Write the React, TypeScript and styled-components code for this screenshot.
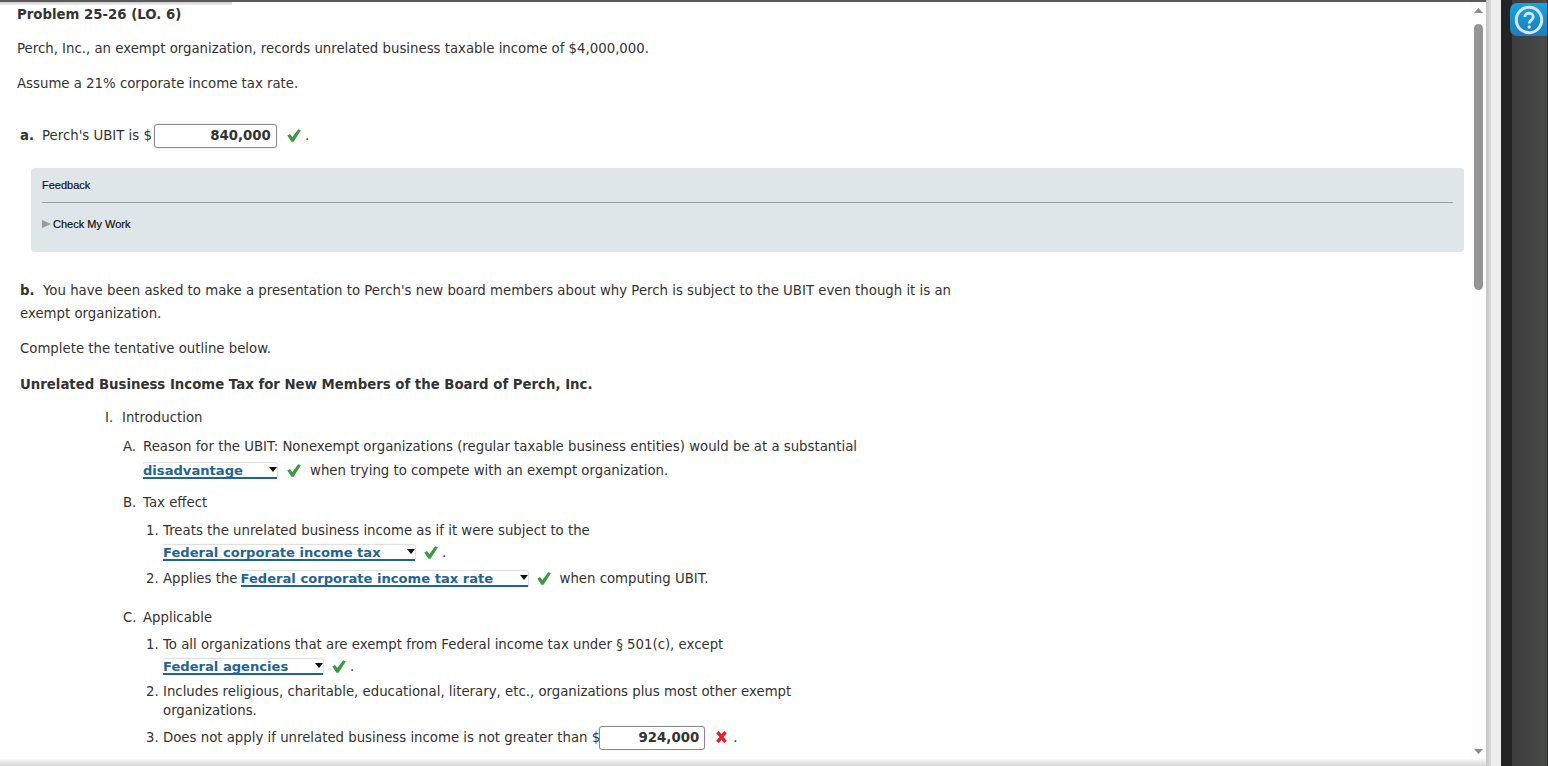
import React from 'react';
import styled, { createGlobalStyle } from 'styled-components';

const Global = createGlobalStyle`
  html, body { margin: 0; padding: 0; height: 100%; overflow: hidden; background: #fff; }
  * { box-sizing: border-box; }
`;

const Page = styled.div`
  display: flex;
  width: 1548px;
  height: 766px;
  overflow: hidden;
  font-family: "DejaVu Sans", Verdana, sans-serif;
  font-size: 13.3px;
  color: #333;
`;

const Main = styled.div`
  position: relative;
  display: flex;
  width: 1486px;
  height: 766px;
  border-top: 2px solid #5a5a5a;
`;

const TopShadow = styled.div`
  position: absolute;
  left: 0;
  top: 0;
  width: 232px;
  height: 3px;
  background: linear-gradient(#c8c8c8, #f4f4f4);
`;

const BottomShadow = styled.div`
  position: absolute;
  left: 0;
  right: 0;
  bottom: 0;
  height: 7px;
  background: linear-gradient(#fafafa, #d4d4d4);
`;

const Content = styled.div`
  flex: 1;
  min-width: 0;
  overflow: hidden;
`;

const Scrollbar = styled.div`
  display: flex;
  flex-direction: column;
  align-items: center;
  width: 15px;
  background: #fdfdfd;
  padding-top: 6px;
  padding-bottom: 6px;
`;

const Thumb = styled.div`
  width: 9px;
  height: 266px;
  margin-top: 5px;
  border-radius: 5px;
  background: #949494;
`;

const Spacer = styled.div`
  flex: 1;
`;

const Arrow = styled.svg`
  display: block;
  margin-bottom: 6px;
`;

const Gutter = styled.div`
  width: 5px;
  background: linear-gradient(90deg, #c4c4c4, #dcdcdc);
`;

const Rail = styled.div`
  width: 11px;
  background: #eeeeee;
`;

const DarkRail = styled.div`
  width: 11px;
  background: #232323;
`;

const Side = styled.div`
  flex: 1;
  padding-top: 3px;
  background: linear-gradient(90deg, #3c3c3c, #4a4a4a);
  border-right: 1px solid #1d3a2c;
`;

const HelpButton = styled.div`
  width: 37px;
  height: 33px;
  margin-left: -2px;
  border-radius: 7px 0 0 7px;
  background: linear-gradient(#12a5e6, #1b7db8);
  display: flex;
  align-items: center;
  justify-content: center;
`;

const Title = styled.div`
  margin: 5px 0 0 17px;
  font-weight: 700;
  line-height: 16px;
`;

const Para = styled.p<{ $top: number; $left?: number; $bold?: boolean }>`
  margin: ${p => p.$top}px 0 0 ${p => p.$left ?? 17}px;
  line-height: 16px;
  font-weight: ${p => (p.$bold ? 700 : 400)};
`;

const Line = styled.div<{ $top: number; $left: number; $height?: number }>`
  display: flex;
  align-items: center;
  margin: ${p => p.$top}px 0 0 ${p => p.$left}px;
  height: ${p => p.$height ?? 16}px;
  line-height: 16px;
  white-space: pre;
`;

const Marker = styled.span<{ $width: number; $bold?: boolean }>`
  flex: none;
  width: ${p => p.$width}px;
  font-weight: ${p => (p.$bold ? 700 : 400)};
`;

const AmountBox = styled.span<{ $width: number; $shift: number }>`
  flex: none;
  width: ${p => p.$width}px;
  height: 24px;
  margin-left: ${p => p.$shift}px;
  border: 1px solid #8a8a8a;
  border-radius: 3px;
  box-shadow: 0 0 1px #999;
  padding-right: 5px;
  text-align: right;
  font-weight: 700;
  line-height: 22px;
`;

const Dropdown = styled.span<{ $width: number; $shift?: number }>`
  position: relative;
  flex: none;
  width: ${p => p.$width}px;
  height: 16px;
  margin-left: ${p => p.$shift ?? 0}px;
  box-shadow: 0 -1px 1px #dddddd, 1px 0 1px #dddddd;
  border-bottom: 2px solid #1f6496;
  border-radius: 2px 2px 0 0;
  color: #1f6496;
  font-weight: 700;
  font-size: 13.1px;
  line-height: 15px;
  overflow: hidden;
`;

const Caret = styled.svg`
  position: absolute;
  right: 0;
  top: 4px;
`;

const Mark = styled.svg<{ $left: number; $right: number }>`
  flex: none;
  margin: 0 ${p => p.$right}px 2px ${p => p.$left}px;
`;

const FeedbackBox = styled.div`
  margin: 20px 22px 0 31px;
  width: 1433px;
  height: 84px;
  border-radius: 4px;
  background: #dfe6e9;
  padding: 0 11px;
  font-family: "Liberation Sans", Arial, sans-serif;
  font-size: 11px;
  color: #111;
  -webkit-text-stroke: 0.2px #111;
`;

const FeedbackTitle = styled.div`
  height: 35px;
  line-height: 35px;
  border-bottom: 1px solid #9aa0a3;
`;

const FeedbackRow = styled.div`
  display: flex;
  align-items: center;
  gap: 2px;
  margin-top: 13px;
  line-height: 16px;
`;

const Tick = ({ left = 9, right = 9 }: { left?: number; right?: number }) => (
  <Mark $left={left} $right={right} width="14" height="13" viewBox="0 0 14 13">
    <path d="M0.3 6.6 L3 5 L5.4 8 L11.2 0.2 L13.9 1.3 L6.6 12.8 L4.4 12.8 Z" fill="#3b9a3f" />
  </Mark>
);

const Cross = () => (
  <Mark $left={11} $right={6} width="11" height="12" viewBox="0 0 11 12">
    <path d="M1.5 1 L9.5 11 M9.5 1 L1.5 11" fill="none" stroke="#f01c24" strokeWidth="3.4" />
  </Mark>
);

const Select = ({ width, shift, children }: { width: number; shift?: number; children: string }) => (
  <Dropdown $width={width} $shift={shift}>
    {children}
    <Caret width="8" height="5" viewBox="0 0 8 5">
      <path d="M0 0 H8 L4 5 Z" fill="#111" />
    </Caret>
  </Dropdown>
);

export default function App() {
  return (
    <Page>
      <Global />
      <Main>
        <TopShadow />
        <BottomShadow />
        <Content>
          <Title>Problem 25-26 (LO. 6)</Title>
          <Para $top={18}>Perch, Inc., an exempt organization, records unrelated business taxable income of $4,000,000.</Para>
          <Para $top={19}>Assume a 21% corporate income tax rate.</Para>
          <Line $top={32} $left={20} $height={24}>
            <Marker $width={22} $bold>a.</Marker>
            Perch's UBIT is $
            <AmountBox $width={123} $shift={2}>840,000</AmountBox>
            <Tick left={10} right={4} />
            .
          </Line>
          <FeedbackBox>
            <FeedbackTitle>Feedback</FeedbackTitle>
            <FeedbackRow>
              <svg width="9" height="8" viewBox="0 0 9 8"><path d="M0 0 L9 4 L0 8 Z" fill="#999" /></svg>
              Check My Work
            </FeedbackRow>
          </FeedbackBox>
          <Line $top={31} $left={20}>
            <Marker $width={23} $bold>b.</Marker>
            You have been asked to make a presentation to Perch's new board members about why Perch is subject to the UBIT even though it is an
          </Line>
          <Line $top={7} $left={20}>exempt organization.</Line>
          <Para $top={19} $left={20}>Complete the tentative outline below.</Para>
          <Para $top={20} $left={20} $bold>Unrelated Business Income Tax for New Members of the Board of Perch, Inc.</Para>
          <Line $top={17} $left={105}><Marker $width={17}>I.</Marker>Introduction</Line>
          <Line $top={13} $left={123}><Marker $width={20}>A.</Marker>Reason for the UBIT: Nonexempt organizations (regular taxable business entities) would be at a substantial</Line>
          <Line $top={8} $left={143}>
            <Select width={134}>disadvantage</Select>
            <Tick left={10} />
            when trying to compete with an exempt organization.
          </Line>
          <Line $top={16} $left={123}><Marker $width={20}>B.</Marker>Tax effect</Line>
          <Line $top={12} $left={146}><Marker $width={17}>1.</Marker>Treats the unrelated business income as if it were subject to the</Line>
          <Line $top={6} $left={163}>
            <Select width={252}>Federal corporate income tax</Select>
            <Tick right={4} />
            .
          </Line>
          <Line $top={10} $left={146}>
            <Marker $width={17}>2.</Marker>
            Applies the
            <Select width={287} shift={3}>Federal corporate income tax rate</Select>
            <Tick />
            when computing UBIT.
          </Line>
          <Line $top={23} $left={123}><Marker $width={20}>C.</Marker>Applicable</Line>
          <Line $top={11} $left={146}><Marker $width={17}>1.</Marker>To all organizations that are exempt from Federal income tax under § 501(c), except</Line>
          <Line $top={6} $left={163}>
            <Select width={160}>Federal agencies</Select>
            <Tick right={4} />
            .
          </Line>
          <Line $top={9} $left={146}><Marker $width={17}>2.</Marker>Includes religious, charitable, educational, literary, etc., organizations plus most other exempt</Line>
          <Line $top={3} $left={163}>organizations.</Line>
          <Line $top={7} $left={146} $height={24}>
            <Marker $width={17}>3.</Marker>
            Does not apply if unrelated business income is not greater than $
            <AmountBox $width={106} $shift={-1}>924,000</AmountBox>
            <Cross />
            .
          </Line>
        </Content>
        <Scrollbar>
          <Arrow width="9" height="5" viewBox="0 0 9 5"><path d="M0 5 L4.5 0 L9 5 Z" fill="#8a8a8a" /></Arrow>
          <Thumb />
          <Spacer />
          <Arrow width="9" height="5" viewBox="0 0 9 5"><path d="M0 0 L4.5 5 L9 0 Z" fill="#8a8a8a" /></Arrow>
        </Scrollbar>
      </Main>
      <Gutter />
      <Rail />
      <DarkRail />
      <Side>
        <HelpButton>
          <svg width="30" height="30" viewBox="0 0 30 30">
            <circle cx="15" cy="15" r="12.7" fill="none" stroke="#d8e4ea" strokeWidth="3" />
            <path d="M10.8 12 C10.8 7 19.2 7 19.2 12 C19.2 15.2 15.2 15 15.2 18.5" fill="none" stroke="#d8e4ea" strokeWidth="2.8" />
            <circle cx="15.2" cy="22" r="1.7" fill="#d8e4ea" />
          </svg>
        </HelpButton>
      </Side>
    </Page>
  );
}
